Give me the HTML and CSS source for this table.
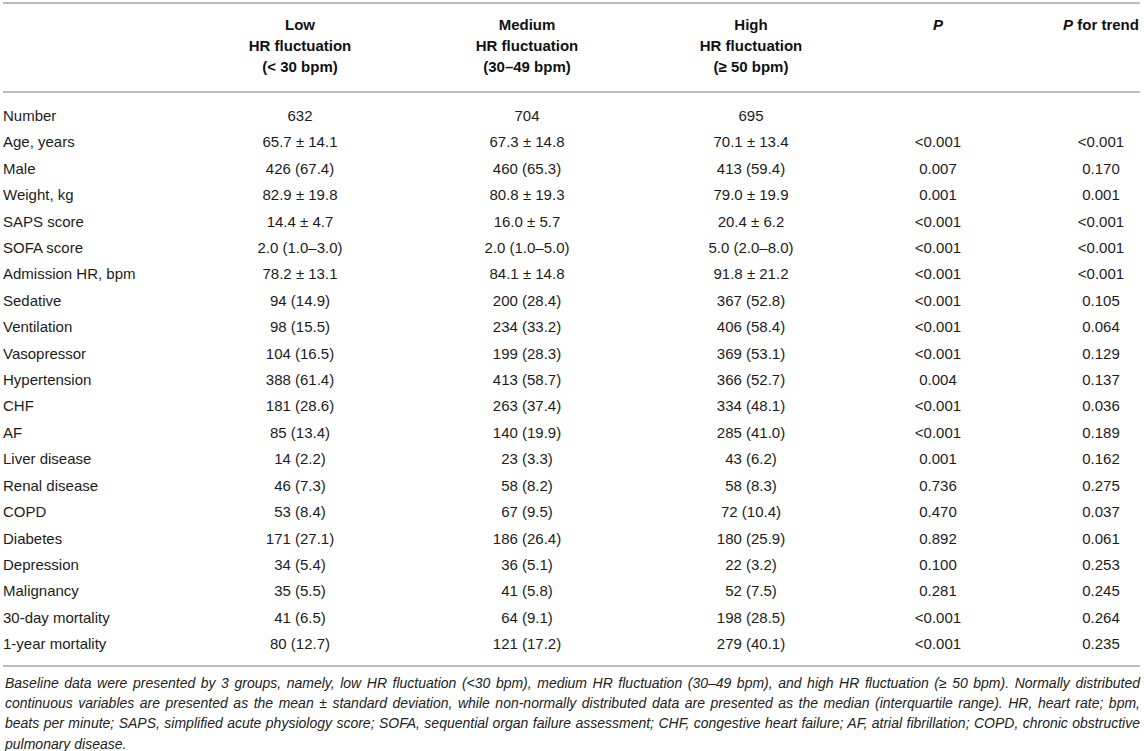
FILE: index.html
```html
<!DOCTYPE html>
<html lang="en">
<head>
    <meta charset="UTF-8">
    <meta name="viewport" content="width=device-width, initial-scale=1.0">
    <title>Baseline characteristics by HR fluctuation</title>
    <link rel="stylesheet" href="styles.css">
</head>
<body>
    <div class="wrap">
        <div class="table">
            <div class="row head">
                <div class="cell label"></div>
                <div class="cell">Low<br>HR fluctuation<br>(&lt; 30 bpm)</div>
                <div class="cell">Medium<br>HR fluctuation<br>(30&ndash;49 bpm)</div>
                <div class="cell">High<br>HR fluctuation<br>(&ge; 50 bpm)</div>
                <div class="cell"><i>P</i></div>
                <div class="cell"><i>P</i> for trend</div>
            </div>
            <div class="body" id="tableBody">
                <!-- rows come from the data list below -->
            </div>
        </div>
        <div class="note">
            <span class="line">Baseline data were presented by 3 groups, namely, low HR fluctuation (&lt;30 bpm), medium HR fluctuation (30&ndash;49 bpm), and high HR fluctuation (&ge; 50 bpm). Normally distributed</span>
            <span class="line">continuous variables are presented as the mean &plusmn; standard deviation, while non-normally distributed data are presented as the median (interquartile range). HR, heart rate; bpm,</span>
            <span class="line">beats per minute; SAPS, simplified acute physiology score; SOFA, sequential organ failure assessment; CHF, congestive heart failure; AF, atrial fibrillation; COPD, chronic obstructive</span>
            <span class="line last">pulmonary disease.</span>
        </div>
    </div>

<script>
const rows = [
    ["Number", "632", "704", "695", "", ""],
    ["Age, years", "65.7 ± 14.1", "67.3 ± 14.8", "70.1 ± 13.4", "<0.001", "<0.001"],
    ["Male", "426 (67.4)", "460 (65.3)", "413 (59.4)", "0.007", "0.170"],
    ["Weight, kg", "82.9 ± 19.8", "80.8 ± 19.3", "79.0 ± 19.9", "0.001", "0.001"],
    ["SAPS score", "14.4 ± 4.7", "16.0 ± 5.7", "20.4 ± 6.2", "<0.001", "<0.001"],
    ["SOFA score", "2.0 (1.0–3.0)", "2.0 (1.0–5.0)", "5.0 (2.0–8.0)", "<0.001", "<0.001"],
    ["Admission HR, bpm", "78.2 ± 13.1", "84.1 ± 14.8", "91.8 ± 21.2", "<0.001", "<0.001"],
    ["Sedative", "94 (14.9)", "200 (28.4)", "367 (52.8)", "<0.001", "0.105"],
    ["Ventilation", "98 (15.5)", "234 (33.2)", "406 (58.4)", "<0.001", "0.064"],
    ["Vasopressor", "104 (16.5)", "199 (28.3)", "369 (53.1)", "<0.001", "0.129"],
    ["Hypertension", "388 (61.4)", "413 (58.7)", "366 (52.7)", "0.004", "0.137"],
    ["CHF", "181 (28.6)", "263 (37.4)", "334 (48.1)", "<0.001", "0.036"],
    ["AF", "85 (13.4)", "140 (19.9)", "285 (41.0)", "<0.001", "0.189"],
    ["Liver disease", "14 (2.2)", "23 (3.3)", "43 (6.2)", "0.001", "0.162"],
    ["Renal disease", "46 (7.3)", "58 (8.2)", "58 (8.3)", "0.736", "0.275"],
    ["COPD", "53 (8.4)", "67 (9.5)", "72 (10.4)", "0.470", "0.037"],
    ["Diabetes", "171 (27.1)", "186 (26.4)", "180 (25.9)", "0.892", "0.061"],
    ["Depression", "34 (5.4)", "36 (5.1)", "22 (3.2)", "0.100", "0.253"],
    ["Malignancy", "35 (5.5)", "41 (5.8)", "52 (7.5)", "0.281", "0.245"],
    ["30-day mortality", "41 (6.5)", "64 (9.1)", "198 (28.5)", "<0.001", "0.264"],
    ["1-year mortality", "80 (12.7)", "121 (17.2)", "279 (40.1)", "<0.001", "0.235"]
];

const tableBody = document.getElementById("tableBody");
rows.forEach((r) => {
    const row = document.createElement("div");
    row.className = "row";
    r.forEach((value, i) => {
        const cell = document.createElement("div");
        cell.className = i === 0 ? "cell label" : "cell";
        cell.textContent = value;
        row.appendChild(cell);
    });
    tableBody.appendChild(row);
});
</script>
</body>
</html>
```

FILE: styles.css
```css
body {
    margin: 0;
    font-family: "Liberation Sans", Arial, sans-serif;
    color: #1c1c1c;
    background-color: #fff;
}
.wrap {
    padding: 2px 4px 0 3px;
}
.table {
    width: 1137px;
}
.row {
    display: grid;
    grid-template-columns: 231px 132px 322px 126px 248px 78px;
}
.cell {
    text-align: center;
    white-space: nowrap;
    font-size: 15px;
}
.cell.label {
    text-align: left;
}
.head {
    border-top: 2px solid #bcbcbc;
    border-bottom: 2px solid #bcbcbc;
    padding: 10px 0 14px;
}
.head .cell {
    font-weight: bold;
    line-height: 21px;
    color: #111;
}
.body {
    padding: 10px 0 7px;
    border-bottom: 2px solid #bcbcbc;
}
.body .cell {
    line-height: 26.4px;
}
.note {
    margin-top: 6px;
    padding-left: 2px;
    font-size: 14px;
    font-style: italic;
    line-height: 20.4px;
    color: #222;
}
.note .line {
    display: block;
    text-align: justify;
    text-align-last: justify;
    white-space: nowrap;
}
.note .line.last {
    text-align-last: left;
}
```
